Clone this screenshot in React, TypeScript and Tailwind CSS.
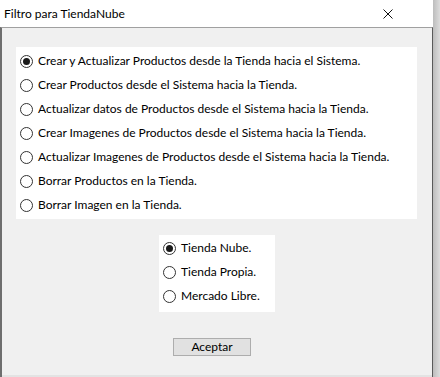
import React from "react";

const options = [
  "Crear y Actualizar Productos desde la Tienda hacia el Sistema.",
  "Crear Productos desde el Sistema hacia la Tienda.",
  "Actualizar datos de Productos desde el Sistema hacia la Tienda.",
  "Crear Imagenes de Productos desde el Sistema hacia la Tienda.",
  "Actualizar Imagenes de Productos desde el Sistema hacia la Tienda.",
  "Borrar Productos en la Tienda.",
  "Borrar Imagen en la Tienda.",
];

const stores = ["Tienda Nube.", "Tienda Propia.", "Mercado Libre."];

const Radio = ({ checked }: { checked: boolean }) => (
  <span className="flex h-[13px] w-[13px] shrink-0 items-center justify-center rounded-full border border-[#333333] bg-white">
    {checked && <span className="h-[7px] w-[7px] rounded-full bg-[#1a1a1a]" />}
  </span>
);

const App = () => {
  const [option, setOption] = React.useState(0);
  const [store, setStore] = React.useState(0);

  return (
    <div className="flex h-[377px] w-[440px] overflow-hidden bg-[#d4d4d4] font-['Segoe_UI','Lato',sans-serif] text-[12px] text-black">
      <div className="flex w-[433px] flex-col bg-white">
        {/* title bar */}
        <div className="flex h-[27px] shrink-0 items-center justify-between pl-[4px] pr-[40px]">
          <span className="pt-[1px]">Filtro para TiendaNube</span>
          <svg width="10" height="10" viewBox="0 0 10 10" className="mt-[1px]">
            <path d="M0.5 0.5L9.5 9.5M9.5 0.5L0.5 9.5" stroke="#111" strokeWidth="1" />
          </svg>
        </div>
        {/* client area */}
        <div className="flex flex-1 flex-col border-l-2 border-r border-t border-l-[#6e6e6e] border-r-[#5a5a5a] border-t-[#a0a0a0] bg-[#f0f0f0]">
          <div className="ml-[14px] mt-[19px] flex h-[172px] w-[401px] flex-col bg-white pl-[4px] pt-[2px]">
            {options.map((label, i) => (
              <label
                key={i}
                onClick={() => setOption(i)}
                className="flex h-[24px] cursor-default items-center gap-[5px] whitespace-nowrap"
              >
                <Radio checked={option === i} />
                <span>{label}</span>
              </label>
            ))}
          </div>
          <div className="ml-[157px] mt-[16px] flex h-[77px] w-[116px] flex-col bg-white pl-[4px] pt-[1px]">
            {stores.map((label, i) => (
              <label
                key={i}
                onClick={() => setStore(i)}
                className="flex h-[24px] cursor-default items-center gap-[5px] whitespace-nowrap"
              >
                <Radio checked={store === i} />
                <span>{label}</span>
              </label>
            ))}
          </div>
          <button className="ml-[171px] mt-[26px] flex h-[18px] w-[78px] items-center justify-center border border-[#adadad] bg-[#e1e1e1] leading-none">
            Aceptar
          </button>
          <div className="mt-auto h-[2px] bg-[#e3e3e3]" />
        </div>
      </div>
      <div className="w-[7px] bg-gradient-to-r from-[#bdbdbd] to-[#dcdcdc]" />
    </div>
  );
};

export default App;
